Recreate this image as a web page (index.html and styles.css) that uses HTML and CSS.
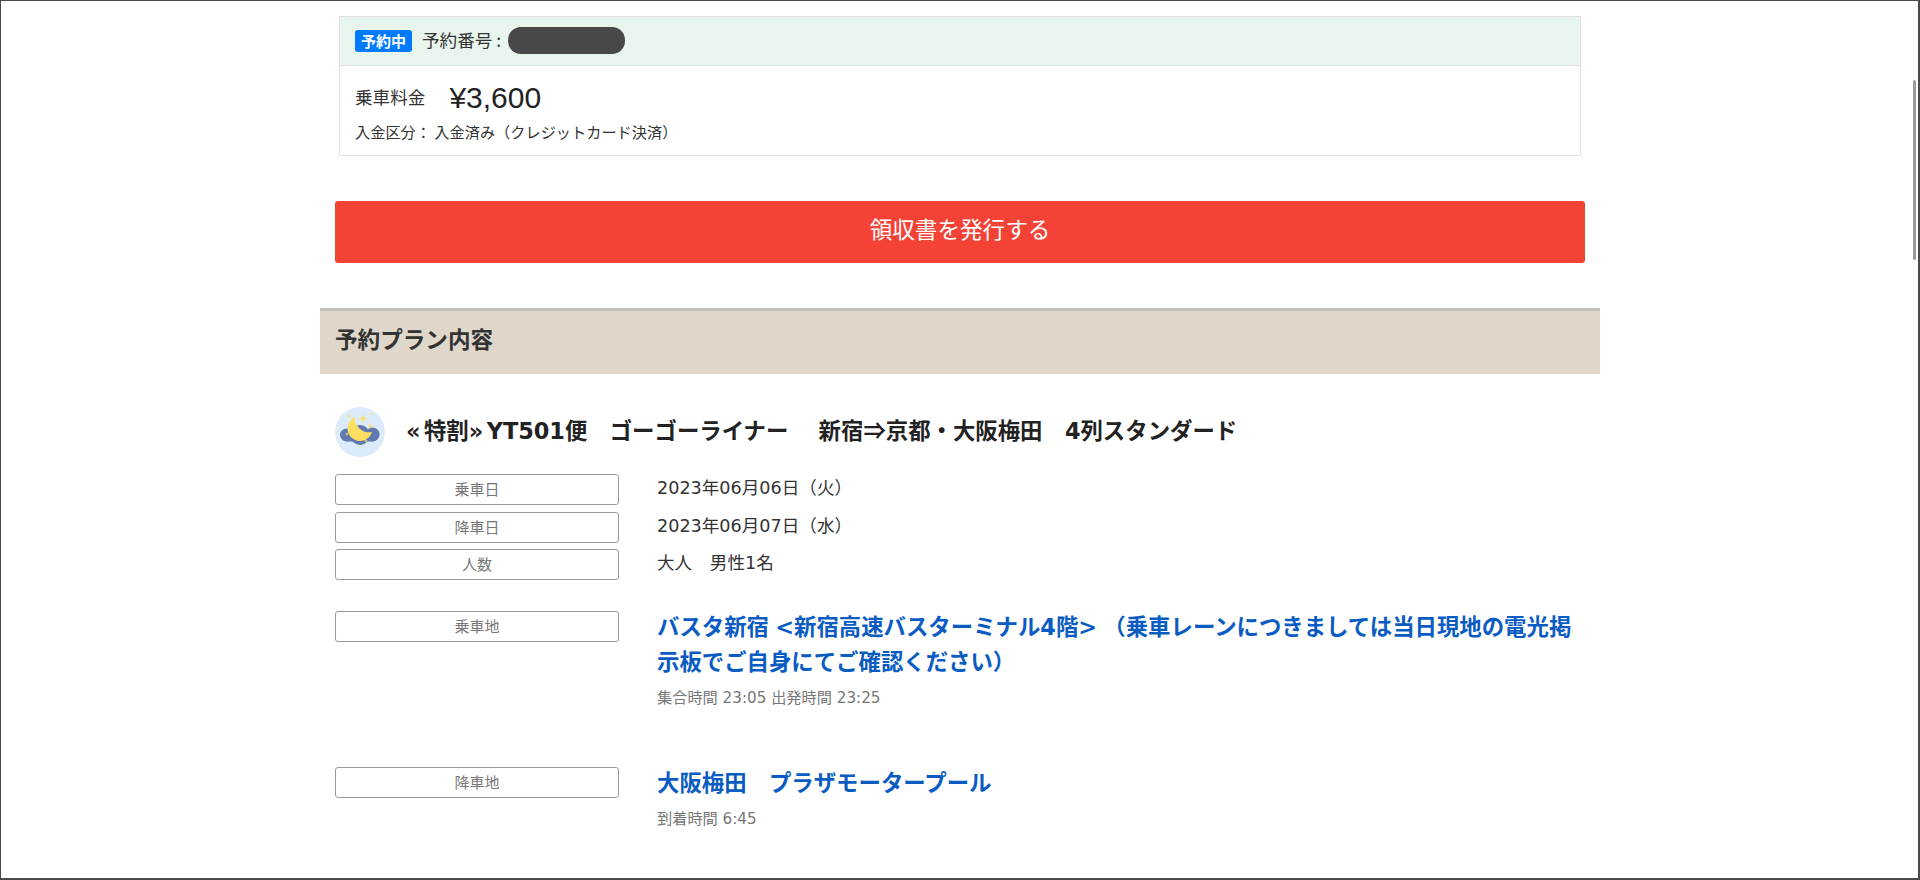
FILE: index.html
```html
<!DOCTYPE html>
<html lang="ja">
<head>
<meta charset="utf-8">
<title>予約内容</title>
<link rel="stylesheet" href="styles.css">
</head>
<body>
<div class="frame">
  <main class="page">
    <section class="status-card">
      <div class="status-head">
        <span class="badge">予約中</span>
        <span class="resv-label">予約番号 :</span>
        <span class="mask"></span>
      </div>
      <div class="status-body">
        <div class="fare"><span class="fare-label">乗車料金</span><span class="fare-value">¥3,600</span></div>
        <div class="pay">入金区分： 入金済み（クレジットカード決済）</div>
      </div>
    </section>
    <div class="btn-wrap"><a class="receipt-btn">領収書を発行する</a></div>
    <h2 class="section-head">予約プラン内容</h2>
    <div class="plan">
      <div class="plan-title">
        <svg class="plan-icon" viewBox="0 0 50 50" aria-hidden="true">
          <circle cx="25" cy="25" r="25" fill="#dcebfb"/>
          <g fill="#6278b0">
            <circle cx="11.500" cy="28" r="6.500"/>
            <circle cx="37.500" cy="27.500" r="7"/>
            <circle cx="25" cy="28" r="10"/>
            <rect x="11" y="26" width="27" height="8.500"/>
          </g>
          <path d="M20 10A12.500 12.500 0 1 0 37 25A14 14 0 0 1 20 10Z" fill="#fde061"/>
          <path d="M28 7l1 3.500 3.500 1-3.500 1-1 3.500-1-3.500-3.500-1 3.500-1zM35 16.500l.8 2 2 .8-2 .8-.8 2-.8-2-2-.8 2-.8zM14 7l.6 1.500 1.500.6-1.500.6-.6 1.500-.6-1.500-1.500-.6 1.500-.6zM37 5l.5 1.500 1.500.5-1.500.5-.5 1.500-.5-1.500-1.500-.5 1.500-.5zM12 25l.5 1.500 1.500.5-1.500.5-.5 1.500-.5-1.500-1.500-.5 1.500-.5zM31 32l.5 1.500 1.500.5-1.500.5-.5 1.500-.5-1.500-1.500-.5 1.500-.5z" fill="#fde061"/>
        </svg>
        <h3 class="plan-name"><span class="guill">«</span>特割<span class="guill">»</span>YT501便　ゴーゴーライナー　 新宿<span class="cjk">⇒</span>京都・大阪梅田　4列スタンダード</h3>
      </div>
      <div class="row row-tight"><div class="tag">乗車日</div><div class="val">2023年06月06日（火）</div></div>
      <div class="row row-tight"><div class="tag">降車日</div><div class="val">2023年06月07日（水）</div></div>
      <div class="row"><div class="tag">人数</div><div class="val">大人　男性1名</div></div>
      <div class="row stop stop-first">
        <div class="tag">乗車地</div>
        <div class="stop-info">
          <div class="stop-name">バスタ新宿 &lt;新宿高速バスターミナル4階&gt; （乗車レーンにつきましては当日現地の電光掲示板でご自身にてご確認ください）</div>
          <div class="stop-time">集合時間 23:05 出発時間 23:25</div>
        </div>
      </div>
      <div class="row stop">
        <div class="tag">降車地</div>
        <div class="stop-info">
          <div class="stop-name">大阪梅田　プラザモータープール</div>
          <div class="stop-time">到着時間 6:45</div>
        </div>
      </div>
    </div>
  </main>
  <div class="scroll-thumb"></div>
</div>
</body>
</html>
```
FILE: styles.css
```css
html, body { margin: 0; padding: 0; height: 100%; overflow: hidden; background: #fff; }
* { box-sizing: border-box; }
body { font-family: "DejaVu Sans", "Noto Sans CJK JP", sans-serif; color: #222; }
.frame { position: relative; width: 1920px; height: 880px; overflow: hidden; border: 1px solid #4a4a4a; border-width: 1px 2px 2px 1px; }
.page { width: 1280px; margin-left: 319px; }
.status-card { margin: 15px 19px 0; width: 1242px; border: 1px solid #e0e0e0; }
.status-head { display: flex; align-items: center; height: 49px; padding: 0 15px; background: #e8f5ec; border-bottom: 1px solid #e0e0e0; }
.badge { display: inline-block; background: #007bff; color: #fff; font-size: 15px; font-weight: 700; line-height: 21px; height: 22px; padding: 0 6px; border-radius: 3px; font-family: "Noto Sans CJK JP", sans-serif; }
.resv-label { font-size: 17.6px; margin-left: 10px; line-height: 24px; margin-top: -2px; font-family: "Noto Sans CJK JP", sans-serif; color: #333; }
.mask { width: 117px; height: 27px; border-radius: 13px; background: #484848; margin-left: 7px; margin-top: -2px; }
.status-body { height: 89px; padding: 16px 15px 0; }
.fare { display: flex; align-items: center; height: 32px; }
.fare-label { font-size: 17.6px; line-height: 26px; margin-top: -3px; font-family: "Noto Sans CJK JP", sans-serif; color: #333; }
.fare-value { font-family: "Liberation Sans", sans-serif; font-size: 30px; margin-left: 24px; color: #222; }
.pay { font-size: 15.2px; margin-top: 7px; font-family: "Noto Sans CJK JP", sans-serif; color: #333; line-height: 20px; }
.btn-wrap { padding: 45px 15px 0; }
.receipt-btn { display: block; height: 62px; line-height: 56px; text-align: center; background: #f44336; color: #fff; font-size: 22.6px; border-radius: 3px; font-family: "Noto Sans CJK JP", sans-serif; }
.section-head { margin: 45px 0 0; height: 66px; line-height: 56px; padding: 0 15px; background: #dfd7ca; border-top: 3px solid #c2c2bc; font-size: 22.6px; font-weight: 700; color: #333; font-family: "Noto Sans CJK JP", sans-serif; }
.plan { padding: 33px 15px 0; }
.plan-title { display: flex; align-items: center; height: 50px; margin-bottom: 17px; }
.plan-icon { width: 50px; height: 50px; flex: none; }
.plan-name { margin: 0 0 6px 21px; font-size: 22.4px; font-weight: 700; color: #222; font-family: "DejaVu Sans", "Noto Sans CJK JP", sans-serif; }
.guill { letter-spacing: 3.5px; }
.cjk { font-family: "Noto Sans CJK JP", sans-serif; }
.row { display: flex; margin-top: 6px; }
.row-tight + .row-tight { margin-top: 7px; }
.tag { flex: none; width: 284px; height: 31px; border: 1px solid #9a9a9a; border-radius: 3px; text-align: center; font-size: 15px; line-height: 27px; color: #777; font-family: "Noto Sans CJK JP", sans-serif; }
.val { margin-left: 38px; font-size: 17.6px; line-height: 28px; color: #333; }
.stop { margin-top: 31px; }
.stop-first { margin-top: 31px; min-height: 125px; }
.stop-info { margin-left: 38px; flex: 1; }
.stop-name { font-size: 22.4px; font-weight: 700; color: #0a5cc2; line-height: 35px; margin-top: -1px; word-spacing: -1.5px; }
.stop-time { font-size: 15.2px; color: #777; margin-top: 5.5px; line-height: 24px; }
.scroll-thumb { position: absolute; top: 79px; left: 1912px; width: 3px; height: 180px; background: #999; border-radius: 2px; }
```
